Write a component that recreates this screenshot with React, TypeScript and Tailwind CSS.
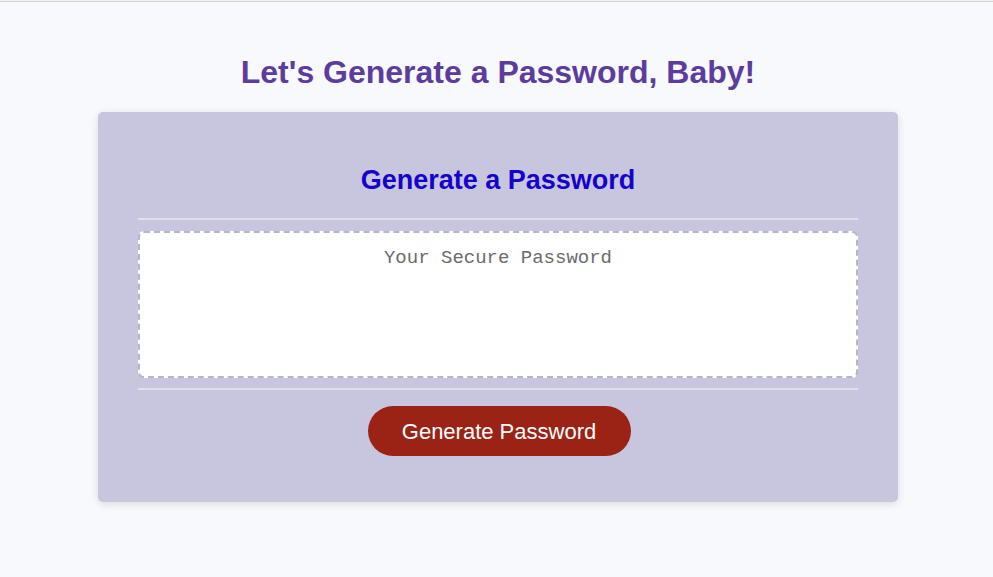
export default function App() {
  return (
    <div className="min-h-screen bg-[#f8f9fd] font-['Liberation_Sans',Arial,sans-serif]">
      {/* top rule */}
      <div className="h-px bg-[#f1f1f1]" />
      <div className="h-px bg-[#d3d3d3]" />

      <div className="flex flex-col items-center">
        <h1 className="mt-[52px] mb-[21px] ml-[3px] text-[32px] leading-[37px] font-bold text-[#5c3d9e]">
          Let's Generate a Password, Baby!
        </h1>

        {/* Card */}
        <div className="w-[800px] ml-[3px] rounded-[5px] bg-[#c8c6de] px-10 pt-[53px] pb-[46px] shadow-[0_2px_8px_rgba(0,0,0,0.12)] flex flex-col items-center">
          <h2 className="text-[27px] leading-[30px] font-bold text-[#1502cb]">
            Generate a Password
          </h2>

          <div className="mt-[23px] h-[2px] w-full bg-[#e1dfe8]" />

          <textarea
            readOnly
            placeholder="Your Secure Password"
            className="mt-[11px] h-[147px] w-full resize-none rounded-md border-2 border-dashed border-[#b4b8c3] bg-white px-4 pt-[14px] text-center font-['Liberation_Mono','Courier_New',monospace] text-[19px] leading-[22px] text-[#555] placeholder:text-[#6b6b6b] outline-none"
          />

          <div className="mt-[10px] h-[2px] w-full bg-[#e1dfe8]" />

          <button className="mt-4 ml-[2px] h-[50px] w-[263px] rounded-full bg-[#9b2315] text-[22px] text-white">
            Generate Password
          </button>
        </div>
      </div>
    </div>
  );
}
